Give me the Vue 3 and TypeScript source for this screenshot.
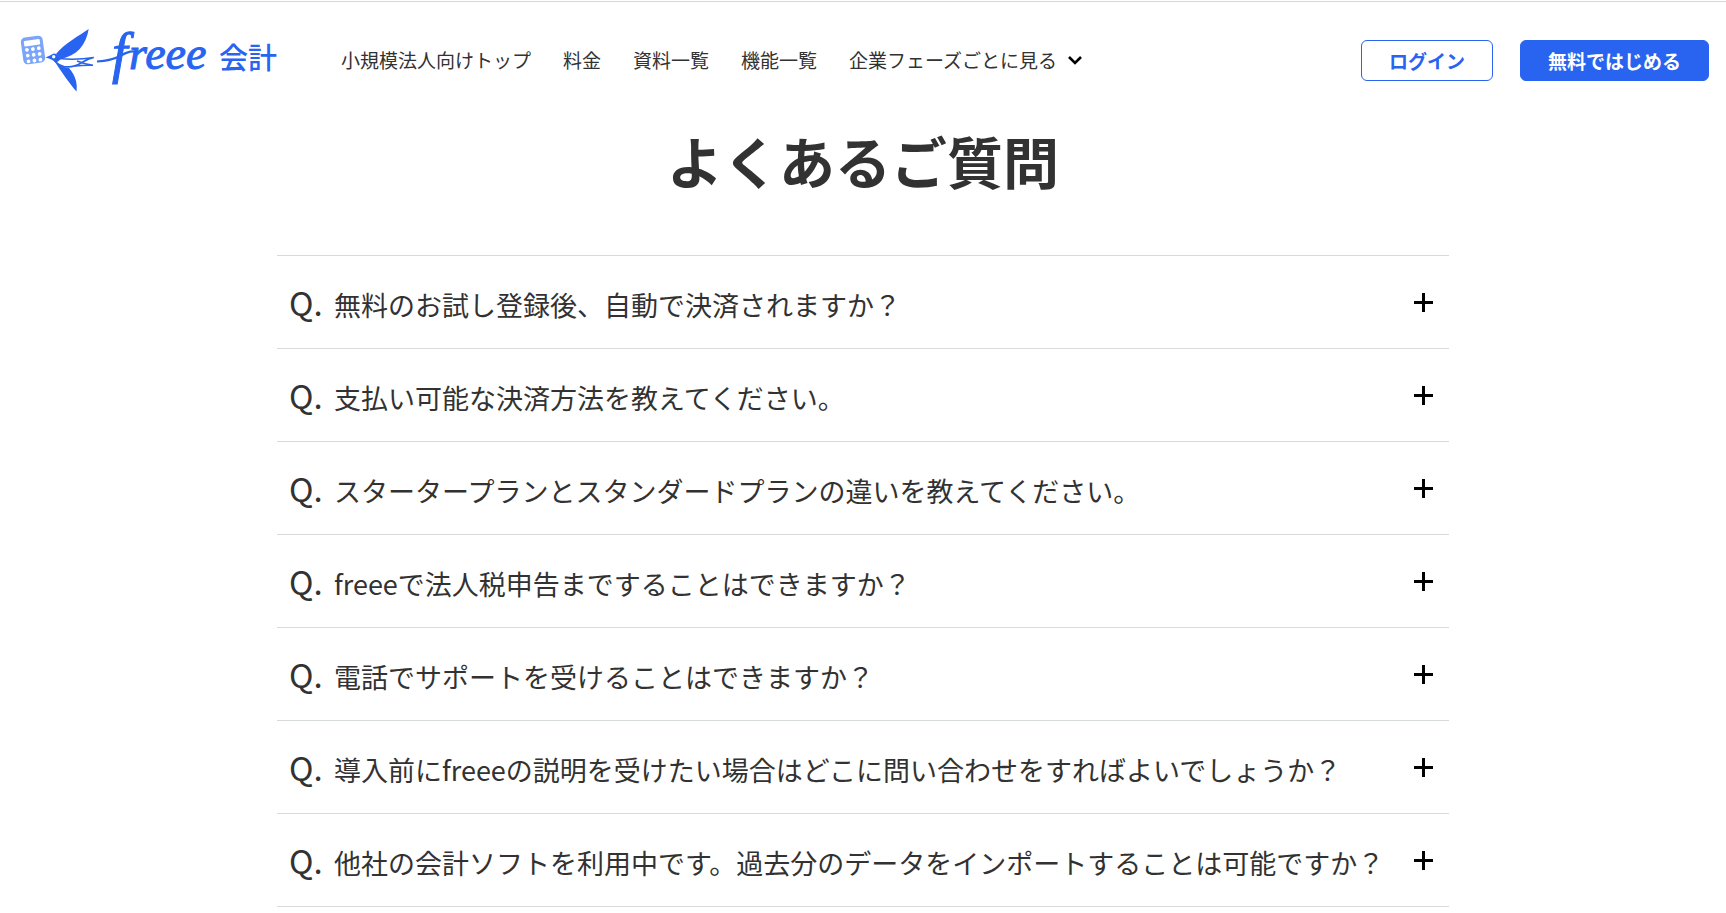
<script setup lang="ts">
import { ref } from 'vue'

interface NavItem {
  label: string
  href: string
}

const navItems: NavItem[] = [
  { label: '小規模法人向けトップ', href: '#top' },
  { label: '料金', href: '#price' },
  { label: '資料一覧', href: '#documents' },
  { label: '機能一覧', href: '#features' },
]

const questions: string[] = [
  '無料のお試し登録後、自動で決済されますか？',
  '支払い可能な決済方法を教えてください。',
  'スタータープランとスタンダードプランの違いを教えてください。',
  'freeeで法人税申告まですることはできますか？',
  '電話でサポートを受けることはできますか？',
  '導入前にfreeeの説明を受けたい場合はどこに問い合わせをすればよいでしょうか？',
  '他社の会計ソフトを利用中です。過去分のデータをインポートすることは可能ですか？',
]

const selected = ref<number | null>(null)
const keyRows = [0, 1, 2]
const keyCols = [0, 1, 2]

function toggle(index: number): void {
  selected.value = selected.value === index ? null : index
}
</script>

<template>
  <div class="page">
    <header class="header">
      <a class="logo" href="#top" aria-label="freee 会計">
        <svg width="260" height="90" viewBox="0 -11 260 90">
          <g transform="translate(13 24) rotate(-8)">
            <rect x="-9.5" y="-12" width="19" height="24" rx="3" fill="#7ba5f8" stroke="#7ba5f8" stroke-width="3" />
            <rect x="-8" y="-10" width="16" height="5.5" rx="1" fill="#fff" />
            <template v-for="r in keyRows" :key="r">
              <circle v-for="c in keyCols" :key="c" :cx="-6 + c * 6" :cy="-1 + r * 5.8" r="1.9" fill="#fff" />
            </template>
          </g>
          <g fill="#2864f0">
            <path d="M68.7 3 C59 10 46 16 36 28 C38 29 40 31 40 33 C57 30 66 19 68.7 3Z" />
            <path d="M25.5 31.5 L31 29 Q34 26 38 29 L41 33 L36 37 Q33 33 25.5 31.5Z" />
            <path d="M35 36 C41 45 49 57 56.5 65.5 C57.5 58 56 50 49 42 Q41 41 35 36Z" />
          </g>
          <g fill="none" stroke="#2864f0" stroke-width="1.6">
            <path d="M39 32.5 Q56 34.5 73.8 31.5 Q67 33 61 37 Q53 42 44 40.5 Q38 39 34 34" />
            <path d="M57 35 Q64 38 73 39.3 Q64 39 55 40" />
          </g>
          <circle cx="33.7" cy="30.8" r="1.7" fill="#fff" />
          <path d="M77 35.5 Q91 35 102 29 T116 27" fill="none" stroke="#2864f0" stroke-width="2.2" />
          <text class="wordmark" x="92" y="46"><tspan class="initial">f</tspan><tspan x="109" y="43">reee</tspan></text>
          <text class="product" x="199" y="43">会計</text>
        </svg>
      </a>
      <nav class="nav">
        <a v-for="item in navItems" :key="item.label" :href="item.href">{{ item.label }}</a>
        <button type="button" class="phase">
          企業フェーズごとに見る
          <svg width="16" height="12" viewBox="0 0 16 12" aria-hidden="true">
            <path d="M2 3 L8 9 L14 3" fill="none" stroke="#000" stroke-width="2.6" />
          </svg>
        </button>
      </nav>
      <div class="actions">
        <a class="button login" href="#login">ログイン</a>
        <a class="button start" href="#start">無料ではじめる</a>
      </div>
    </header>

    <main class="faq">
      <h1>よくあるご質問</h1>
      <ul>
        <li v-for="(question, index) in questions" :key="question">
          <button type="button" class="question" :aria-pressed="selected === index" @click="toggle(index)">
            <span class="mark">Q.</span>
            <span class="text">{{ question }}</span>
            <svg class="plus" width="19" height="19" viewBox="0 0 19 19" aria-hidden="true">
              <path d="M9.5 0V19M0 9.5H19" stroke="#000" stroke-width="3" />
            </svg>
          </button>
        </li>
      </ul>
    </main>
  </div>
</template>

<style>
body {
  margin: 0;
  background: #fff;
}
</style>

<style scoped>
.page {
  border-top: 1px solid #fff;
  color: #323232;
  font-family: "Noto Sans CJK JP", sans-serif;
}

.header {
  display: flex;
  align-items: center;
  box-sizing: border-box;
  height: 117px;
  padding: 0 17px 0 20px;
  border-top: 1px solid #d5d8d8;
}

.logo {
  display: flex;
  flex: none;
}

.wordmark {
  fill: #2864f0;
  stroke: #2864f0;
  stroke-width: 1px;
  font: italic 46px "Liberation Serif", serif;
}

.initial {
  font-size: 56px;
}

.product {
  fill: #2864f0;
  font-size: 29px;
  font-weight: 500;
}

.nav {
  display: flex;
  align-items: center;
  gap: 32px;
  margin-left: 61px;
  font-size: 19px;
  line-height: 28px;
  white-space: nowrap;
}

.nav a,
.phase {
  color: #323232;
  text-decoration: none;
}

.phase {
  display: flex;
  align-items: center;
  gap: 10px;
  padding: 0;
  border: 0;
  background: none;
  font: inherit;
  cursor: pointer;
}

.actions {
  display: flex;
  gap: 27px;
  margin-left: auto;
}

.button {
  padding: 5px 27px;
  border: 1px solid #2864f0;
  border-radius: 6px;
  font-size: 19px;
  font-weight: 700;
  line-height: 29px;
  text-decoration: none;
  white-space: nowrap;
}

.login {
  color: #2864f0;
}

.start {
  background: #2864f0;
  color: #fff;
}

.faq {
  max-width: 1172px;
  margin: 0 auto;
}

h1 {
  margin: 0 0 53px;
  font-size: 56px;
  font-weight: 700;
  line-height: 84px;
  text-align: center;
}

ul {
  margin: 0;
  padding: 0;
  border-top: 1px solid #d7dadb;
  list-style: none;
}

li {
  border-bottom: 1px solid #d7dadb;
}

.question {
  display: flex;
  align-items: center;
  width: 100%;
  padding: 22px 16px 22px 12px;
  border: 0;
  background: none;
  color: inherit;
  font: inherit;
  font-size: 27px;
  line-height: 48px;
  text-align: left;
  cursor: pointer;
}

.mark {
  flex: none;
  width: 45px;
  font-size: 33px;
}

.text {
  flex: 1;
  padding-top: 6px;
  line-height: 42px;
}

.plus {
  flex: none;
}
</style>
